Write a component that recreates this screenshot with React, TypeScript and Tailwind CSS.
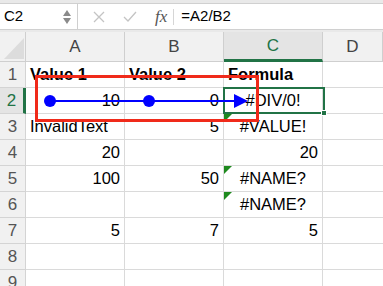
type Cell = { v: string; align?: "l" | "r" | "c"; bold?: boolean; tri?: boolean };

const rows: Cell[][] = [
  [{ v: "Value 1", bold: true }, { v: "Value 2", bold: true }, { v: "Formula", bold: true }],
  [{ v: "10", align: "r" }, { v: "0", align: "r" }, { v: "#DIV/0!", align: "c" }],
  [{ v: "InvalidText" }, { v: "5", align: "r" }, { v: "#VALUE!", align: "c", tri: true }],
  [{ v: "20", align: "r" }, { v: "" }, { v: "20", align: "r" }],
  [{ v: "100", align: "r" }, { v: "50", align: "r" }, { v: "#NAME?", align: "c", tri: true }],
  [{ v: "" }, { v: "" }, { v: "#NAME?", align: "c", tri: true }],
  [{ v: "5", align: "r" }, { v: "7", align: "r" }, { v: "5", align: "r" }],
  [{ v: "" }, { v: "" }, { v: "" }],
  [{ v: "" }, { v: "" }, { v: "" }],
];

const alignCls = { l: "justify-start pl-[4px]", r: "justify-end pr-[4px]", c: "justify-center" };

export default function App() {
  return (
    <div className="w-[383px] h-[286px] overflow-hidden bg-white relative" style={{ fontFamily: "'Liberation Sans', Arial, sans-serif" }}>
      {/* formula bar */}
      <div className="h-[32px] bg-[#e9e9e9] pt-[3px] pb-[2px]">
        <div className="flex h-[27px] bg-white border-y border-[#d0d0d0]">
          <div className="w-[78px] flex items-center justify-between pl-[4px] pr-[6px] border-r border-[#cfcfcf] text-[15px] text-black">
            <span>C2</span>
            <div className="flex flex-col items-center leading-none">
              <svg width="8" height="6" viewBox="0 0 8 6"><path d="M4 0 L8 6 L0 6 Z" fill="#8a8a8a" /></svg>
              <svg width="8" height="6" viewBox="0 0 8 6" className="mt-[2px]"><path d="M0 0 L8 0 L4 6 Z" fill="#8a8a8a" /></svg>
            </div>
          </div>
          <div className="flex items-center pl-[14px]">
            <svg width="12" height="12" viewBox="0 0 12 12" className="ml-[1px]"><path d="M1 1 L11 11 M11 1 L1 11" stroke="#c4c4c4" strokeWidth="1.3" /></svg>
            <svg width="14" height="12" viewBox="0 0 14 12" className="ml-[18px]"><path d="M1 6 L5 10 L13 1" stroke="#c4c4c4" strokeWidth="1.3" fill="none" /></svg>
            <span className="ml-[18px] text-[17px] italic text-[#555]" style={{ fontFamily: "'Liberation Serif', serif" }}>fx</span>
            <div className="ml-[6px] w-px h-[16px] bg-[#d6d6d6]" />
            <span className="ml-[7px] text-[15px] text-black">=A2/B2</span>
          </div>
        </div>
      </div>

      {/* sheet grid */}
      <div className="grid grid-cols-[26px_99px_99px_99px_1fr] grid-rows-[30px_repeat(9,26px)] text-[16.5px] text-black">
        <div className="bg-[#f1f1f1] border-r border-b border-[#cfcfcf] relative overflow-hidden">
          <svg width="26" height="30" className="absolute inset-0"><path d="M24 6 L24 27 L4 27 Z" fill="#dcdcdc" /></svg>
        </div>
        {["A", "B", "C", "D"].map((c) => (
          <div
            key={c}
            className={
              c === "C"
                ? "bg-[#e4e4e4] border-r border-[#cfcfcf] border-b-[3px] border-b-[#217346] text-[#217346] flex items-center justify-center text-[17px]"
                : "bg-[#f1f1f1] border-r border-b border-[#cfcfcf] text-[#444] flex items-center justify-center text-[17px]"
            }
          >
            {c}
          </div>
        ))}
        {rows.map((r, i) => (
          <>
            <div
              key={"h" + i}
              className={
                i === 1
                  ? "bg-[#e4e4e4] border-r-[3px] border-r-[#217346] border-b border-[#d4d4d4] flex items-center justify-center text-[17px] text-[#217346]"
                  : "bg-[#f1f1f1] border-r border-b border-[#d4d4d4] flex items-center justify-center text-[17px] text-[#555]"
              }
            >
              {i + 1}
            </div>
            {r.map((c, j) => (
              <div
                key={i + "-" + j}
                className={`relative flex items-center border-r border-b border-[#dadada] ${alignCls[c.align ?? "l"]} ${c.bold ? "font-bold" : ""}`}
              >
                {c.tri && (
                  <svg width="8" height="8" className="absolute left-0 top-0"><path d="M0 0 L8 0 L0 8 Z" fill="#1e8a1e" /></svg>
                )}
                {c.v}
              </div>
            ))}
            <div key={"d" + i} className="border-b border-[#dadada]" />
          </>
        ))}
      </div>

      {/* selection on C2 */}
      <div className="absolute left-[223px] top-[87px] w-[102px] h-[27px] border-2 border-[#217346]">
        <div className="absolute right-[-4px] bottom-[-4px] w-[6px] h-[6px] bg-[#217346] border border-white" />
      </div>

      {/* red box */}
      <div className="absolute left-[35px] top-[75px] w-[224px] h-[47px] border-[3px] border-[#f02a1a]" />

      {/* blue arrow */}
      <svg width="383" height="286" className="absolute inset-0 pointer-events-none">
        <line x1="50" y1="101" x2="236" y2="101" stroke="#0000ff" strokeWidth="2" />
        <path d="M234 94 L248 101 L234 108 Z" fill="#0000ff" />
        <circle cx="50" cy="101" r="6" fill="#0000ff" />
        <circle cx="149" cy="101" r="6" fill="#0000ff" />
      </svg>
    </div>
  );
}
